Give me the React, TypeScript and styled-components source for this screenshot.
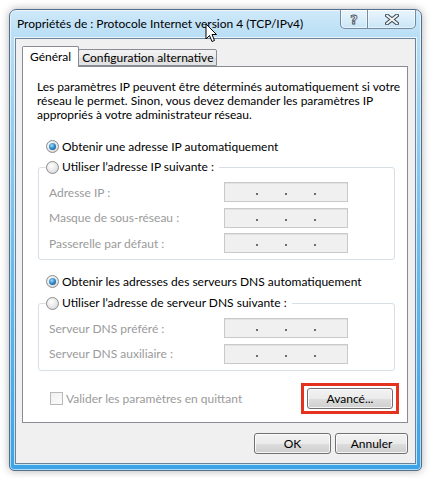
import React from 'react'
import styled, { createGlobalStyle } from 'styled-components'

const GlobalStyle = createGlobalStyle`
  html, body {
    margin: 0;
    padding: 0;
    background: #ffffff;
  }
  body {
    font-family: Lato, 'Open Sans', 'DejaVu Sans', sans-serif;
    font-size: 12px;
    color: #000000;
  }
  * {
    box-sizing: border-box;
  }
`

const Page = styled.div`
  position: relative;
  width: 431px;
  height: 478px;
  padding: 9px 0 0 9px;
`

const Window = styled.div`
  display: flex;
  flex-direction: column;
  width: 413px;
  height: 462px;
  border: 1px solid #52708d;
  border-radius: 7px 7px 5px 5px;
  background: linear-gradient(
    180deg,
    #cfe9f9 0px,
    #b9def5 26px,
    #93cdf0 120px,
    #62b8ec 280px,
    #3ba3e6 100%
  );
  box-shadow: 0 0 9px rgba(0, 0, 0, 0.3), inset 0 0 0 1px rgba(255, 255, 255, 0.6);
`

const TitleBar = styled.div`
  display: flex;
  align-items: flex-start;
  height: 28px;
  padding: 0 5px 0 7px;
`

const Title = styled.div`
  flex: 1;
  line-height: 28px;
  color: #000000;
  white-space: nowrap;
`

const CaptionButtons = styled.div`
  display: flex;
`

const CaptionButton = styled.div<{ $w: number; $side: 'left' | 'right' }>`
  display: flex;
  align-items: center;
  justify-content: center;
  width: ${({ $w }) => $w}px;
  height: 19px;
  border: 1px solid rgba(48, 72, 100, 0.6);
  border-top: none;
  border-left-width: ${({ $side }) => ($side === 'left' ? 1 : 0)}px;
  border-radius: ${({ $side }) => ($side === 'left' ? '0 0 0 5px' : '0 0 5px 0')};
  background: linear-gradient(180deg, rgba(255, 255, 255, 0.55), rgba(255, 255, 255, 0.15));
  box-shadow: inset 0 0 0 1px rgba(255, 255, 255, 0.5);
`

const HelpGlyph = styled.span`
  font-family: 'DejaVu Sans', sans-serif;
  font-weight: bold;
  font-size: 13px;
  line-height: 1;
  color: #f4f4f4;
  -webkit-text-stroke: 0.8px #3d4b5a;
`

const Client = styled.div`
  flex: 1;
  display: flex;
  flex-direction: column;
  margin: 0 5px 6px 5px;
  padding: 7px 7px 0 6px;
  background: #f0f0f0;
  border: 1px solid #6c8299;
  box-shadow: 0 0 0 1px rgba(255, 255, 255, 0.7);
`

const TabBar = styled.div`
  display: flex;
  align-items: flex-end;
  height: 20px;
`

const Tab = styled.div<{ $active?: boolean }>`
  position: relative;
  z-index: ${({ $active }) => ($active ? 1 : 0)};
  height: ${({ $active }) => ($active ? 21 : 17)}px;
  margin-bottom: ${({ $active }) => ($active ? -1 : 0)}px;
  margin-left: ${({ $active }) => ($active ? 0 : -1)}px;
  padding: 0 ${({ $active }) => ($active ? 7 : 3)}px;
  line-height: ${({ $active }) => ($active ? 19 : 16)}px;
  border: 1px solid #898c95;
  border-bottom: ${({ $active }) => ($active ? 'none' : '1px solid #898c95')};
  border-radius: 2px 2px 0 0;
  background: ${({ $active }) =>
    $active ? '#ffffff' : 'linear-gradient(180deg, #f3f3f3 0%, #ebebeb 50%, #dedede 51%, #e3e3e3 100%)'};
  white-space: nowrap;
`

const Panel = styled.div`
  display: flex;
  flex-direction: column;
  height: 357px;
  padding: 13px 0 0 14px;
  background: #ffffff;
  border: 1px solid #898c95;
`

const Intro = styled.p`
  margin: 0;
  line-height: 14px;
  white-space: nowrap;
`

const RadioRow = styled.label<{ $mt?: number }>`
  display: flex;
  align-items: center;
  gap: 3px;
  height: 16px;
  margin-top: ${({ $mt }) => $mt ?? 0}px;
  padding-left: 9px;
`

const Radio = styled.span<{ $checked?: boolean }>`
  display: flex;
  align-items: center;
  justify-content: center;
  width: 13px;
  height: 13px;
  border-radius: 50%;
  border: 1px solid #8c8c8c;
  background: radial-gradient(circle at 40% 35%, #ffffff 0%, #e6e6e6 55%, #cfcfcf 100%);

  &::after {
    content: '';
    display: ${({ $checked }) => ($checked ? 'block' : 'none')};
    width: 7px;
    height: 7px;
    border-radius: 50%;
    background: radial-gradient(circle at 40% 35%, #9fdcfb 0%, #2e86c8 50%, #10457a 100%);
  }
`

const Group = styled.fieldset<{ $mt: number }>`
  margin: ${({ $mt }) => $mt}px 12px 0 1px;
  padding: 0 0 6px 10px;
  min-inline-size: 0;
  border: 1px solid #d5dfe5;
  border-radius: 3px;
`

const Legend = styled.legend`
  display: flex;
  align-items: center;
  gap: 3px;
  margin-left: -3px;
  padding: 0 5px 0 0;
  line-height: 16px;
`

const Fields = styled.div`
  display: grid;
  grid-template-columns: 175px 124px;
  grid-auto-rows: 20px;
  row-gap: 5.5px;
  margin-top: 7px;
`

const FieldLabel = styled.span`
  align-self: center;
  color: #9a9a9a;
`

const IpBox = styled.div`
  display: flex;
  align-items: center;
  padding-left: 31px;
  gap: 27px;
  background: #f0f0f0;
  border: 1px solid #c9c9c9;
  box-shadow: inset 0 1px 0 #e2e2e2;
`

const IpDot = styled.span`
  width: 2px;
  height: 2px;
  margin-top: 4px;
  background: #6d6d6d;
`

const FooterRow = styled.div`
  display: flex;
  align-items: center;
  justify-content: space-between;
  margin: 12px 8px 0 13px;
`

const CheckLabel = styled.label`
  display: flex;
  align-items: center;
  gap: 3px;
  color: #9a9a9a;
`

const CheckBox = styled.span`
  width: 13px;
  height: 13px;
  border: 1px solid #b9b9b9;
  background: linear-gradient(135deg, #f0f0f0, #fbfbfb);
`

const Highlight = styled.div`
  padding: 2px 3px;
  border: 3px solid #e4321f;
`

const Button = styled.button<{ $w: number }>`
  display: block;
  width: ${({ $w }) => $w}px;
  height: 21px;
  padding: 0;
  font-family: inherit;
  font-size: 12px;
  color: #000000;
  border: 1px solid #707070;
  border-radius: 3px;
  background: linear-gradient(180deg, #f2f2f2 0%, #ebebeb 50%, #dddddd 51%, #cfcfcf 100%);
  box-shadow: inset 0 0 0 1px rgba(255, 255, 255, 0.8);
`

const ButtonRow = styled.div`
  display: flex;
  justify-content: flex-end;
  gap: 4px;
  margin-top: 10px;
`

const Cursor = styled.svg`
  position: absolute;
  left: 205px;
  top: 23px;
`

function IpField() {
  return (
    <IpBox>
      <IpDot />
      <IpDot />
      <IpDot />
    </IpBox>
  )
}

export default function App() {
  return (
    <Page>
      <GlobalStyle />
      <Window>
        <TitleBar>
          <Title>Propriétés de : Protocole Internet version 4 (TCP/IPv4)</Title>
          <CaptionButtons>
            <CaptionButton $w={28} $side="left">
              <HelpGlyph>?</HelpGlyph>
            </CaptionButton>
            <CaptionButton $w={48} $side="right">
              <svg width="14" height="11" viewBox="0 0 14 11">
                <path d="M2 1.5 L12 9.5 M12 1.5 L2 9.5" stroke="#3d4b5a" strokeWidth="4" strokeLinecap="round" />
                <path d="M2 1.5 L12 9.5 M12 1.5 L2 9.5" stroke="#f2f2f2" strokeWidth="2" strokeLinecap="round" />
              </svg>
            </CaptionButton>
          </CaptionButtons>
        </TitleBar>

        <Client>
          <TabBar>
            <Tab $active>Général</Tab>
            <Tab>Configuration alternative</Tab>
          </TabBar>

          <Panel>
            <Intro>
              Les paramètres IP peuvent être déterminés automatiquement si votre
              <br />
              réseau le permet. Sinon, vous devez demander les paramètres IP
              <br />
              appropriés à votre administrateur réseau.
            </Intro>

            <RadioRow $mt={16}>
              <Radio $checked />
              Obtenir une adresse IP automatiquement
            </RadioRow>

            <Group $mt={5}>
              <Legend>
                <Radio />
                Utiliser l’adresse IP suivante :
              </Legend>
              <Fields>
                <FieldLabel>Adresse IP :</FieldLabel>
                <IpField />
                <FieldLabel>Masque de sous-réseau :</FieldLabel>
                <IpField />
                <FieldLabel>Passerelle par défaut :</FieldLabel>
                <IpField />
              </Fields>
            </Group>

            <RadioRow $mt={13}>
              <Radio $checked />
              Obtenir les adresses des serveurs DNS automatiquement
            </RadioRow>

            <Group $mt={6}>
              <Legend>
                <Radio />
                Utiliser l’adresse de serveur DNS suivante :
              </Legend>
              <Fields>
                <FieldLabel>Serveur DNS préféré :</FieldLabel>
                <IpField />
                <FieldLabel>Serveur DNS auxiliaire :</FieldLabel>
                <IpField />
              </Fields>
            </Group>

            <FooterRow>
              <CheckLabel>
                <CheckBox />
                Valider les paramètres en quittant
              </CheckLabel>
              <Highlight>
                <Button $w={86}>Avancé...</Button>
              </Highlight>
            </FooterRow>
          </Panel>

          <ButtonRow>
            <Button $w={77}>OK</Button>
            <Button $w={73}>Annuler</Button>
          </ButtonRow>
        </Client>
      </Window>

      <Cursor width="13" height="20" viewBox="0 0 13 20">
        <path d="M1 1 L1 16 L4.5 12.5 L7 18.5 L9.5 17.5 L7 11.5 L11.5 11.5 Z" fill="#ffffff" stroke="#000000" strokeWidth="1" strokeLinejoin="round" />
      </Cursor>
    </Page>
  )
}
